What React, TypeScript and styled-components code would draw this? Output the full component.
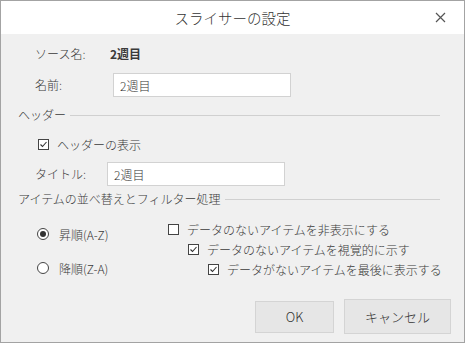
import styled, { createGlobalStyle } from "styled-components";

const GlobalStyle = createGlobalStyle`
  html, body {
    margin: 0;
    padding: 0;
    background: #ffffff;
  }
  body {
    font-family: "Noto Sans CJK JP", "Noto Sans", sans-serif;
    font-weight: 300;
    color: #3a3a3a;
  }
`;

const Dialog = styled.div`
  width: 465px;
  height: 343px;
  box-sizing: border-box;
  border: 1px solid #a3a3a3;
  background: #f0f0f0;
  display: flex;
  flex-direction: column;
`;

const TitleBar = styled.header`
  height: 33px;
  background: #fff;
  display: grid;
  grid-template-columns: 40px 1fr 40px;
  align-items: center;
`;

const Title = styled.h1`
  grid-column: 2;
  margin: 0;
  text-align: center;
  font-size: 14.5px;
  font-weight: 300;
  color: #333;
  line-height: 33px;
`;

const CloseButton = styled.button`
  grid-column: 3;
  width: 20px;
  height: 20px;
  padding: 0;
  border: 0;
  background: transparent;
  display: flex;
  align-items: center;
  justify-content: center;
  margin-left: 6px;
  cursor: pointer;
`;

const Body = styled.div`
  padding: 0 24px 0 17px;
  font-size: 12px;
`;

const Row = styled.div<{ $top: number; $indent?: number }>`
  display: flex;
  align-items: center;
  margin-top: ${(p) => p.$top}px;
  padding-left: ${(p) => p.$indent ?? 17}px;
  min-height: 20px;
`;

const Label = styled.span<{ $width: number }>`
  width: ${(p) => p.$width}px;
  flex-shrink: 0;
  line-height: 20px;
`;

const Value = styled.span`
  font-weight: 700;
  line-height: 20px;
`;

const TextInput = styled.input`
  width: 178px;
  height: 24px;
  box-sizing: border-box;
  border: 1px solid #d2d2d2;
  background: #fff;
  padding: 0 6px;
  font: inherit;
  font-size: 12px;
  color: #333;
  outline: none;
`;

const SectionHeader = styled.div<{ $top: number }>`
  display: flex;
  align-items: center;
  gap: 4px;
  margin-top: ${(p) => p.$top}px;
  height: 16px;
  line-height: 16px;

  &::after {
    content: "";
    flex: 1;
    height: 1px;
    background: #d0d0d0;
  }
`;

const Options = styled.div`
  display: grid;
  grid-template-columns: 131px 1fr;
  padding-left: 19px;
  margin-top: 12px;
`;

const RadioGroup = styled.div`
  display: flex;
  flex-direction: column;
  gap: 14px;
  padding-top: 5px;
`;

const CheckGroup = styled.div`
  display: flex;
  flex-direction: column;
`;

const OptionLine = styled.label<{ $level?: number; $gap: number }>`
  display: flex;
  align-items: center;
  gap: ${(p) => p.$gap}px;
  height: 20px;
  padding-left: ${(p) => (p.$level ?? 0) * 20}px;
  white-space: nowrap;
`;

const Box = styled.span`
  width: 11px;
  height: 11px;
  box-sizing: border-box;
  border: 1px solid #444;
  background: #fff;
  display: flex;
  align-items: center;
  justify-content: center;
  flex-shrink: 0;
`;

const Radio = styled.span<{ $on?: boolean }>`
  width: 12px;
  height: 12px;
  box-sizing: border-box;
  border: 1px solid #444;
  border-radius: 50%;
  background: #fff;
  display: flex;
  align-items: center;
  justify-content: center;
  flex-shrink: 0;

  &::after {
    content: "";
    width: 6px;
    height: 6px;
    border-radius: 50%;
    background: ${(p) => (p.$on ? "#333" : "transparent")};
  }
`;

const Footer = styled.div`
  margin-top: auto;
  display: flex;
  justify-content: flex-end;
  align-items: center;
  gap: 10px;
  padding: 0 13px 8px 0;
`;

const Button = styled.button<{ $w: number; $h: number }>`
  width: ${(p) => p.$w}px;
  height: ${(p) => p.$h}px;
  box-sizing: border-box;
  border: 1px solid #d4d4d4;
  background: #e6e6e6;
  font-family: inherit;
  font-weight: 300;
  font-size: 13px;
  color: #333;
  padding: 0;
`;

function CheckBox({ checked }: { checked?: boolean }) {
  return (
    <Box>
      {checked && (
        <svg width="9" height="9" viewBox="0 0 9 9">
          <polyline points="1.5,4.5 3.5,6.5 7.5,2" fill="none" stroke="#333" strokeWidth="1.1" />
        </svg>
      )}
    </Box>
  );
}

export default function App() {
  return (
    <>
      <GlobalStyle />
      <Dialog>
        <TitleBar>
          <Title>スライサーの設定</Title>
          <CloseButton aria-label="閉じる">
            <svg width="11" height="11" viewBox="0 0 11 11">
              <path d="M1 1 L10 10 M10 1 L1 10" stroke="#555" strokeWidth="1.2" />
            </svg>
          </CloseButton>
        </TitleBar>
        <Body>
          <Row $top={10}>
            <Label $width={75}>ソース名:</Label>
            <Value>2週目</Value>
          </Row>
          <Row $top={9}>
            <Label $width={78}>名前:</Label>
            <TextInput defaultValue="2週目" />
          </Row>
          <SectionHeader $top={10}>ヘッダー</SectionHeader>
          <Row $top={11} $indent={20}>
            <OptionLine $gap={8}>
              <CheckBox checked />
              ヘッダーの表示
            </OptionLine>
          </Row>
          <Row $top={8}>
            <Label $width={72}>タイトル:</Label>
            <TextInput defaultValue="2週目" />
          </Row>
          <SectionHeader $top={5}>アイテムの並べ替えとフィルター処理</SectionHeader>
          <Options>
            <RadioGroup>
              <OptionLine $gap={10}>
                <Radio $on />
                昇順(A-Z)
              </OptionLine>
              <OptionLine $gap={10}>
                <Radio />
                降順(Z-A)
              </OptionLine>
            </RadioGroup>
            <CheckGroup>
              <OptionLine $gap={8}>
                <CheckBox />
                データのないアイテムを非表示にする
              </OptionLine>
              <OptionLine $gap={8} $level={1}>
                <CheckBox checked />
                データのないアイテムを視覚的に示す
              </OptionLine>
              <OptionLine $gap={8} $level={2}>
                <CheckBox checked />
                データがないアイテムを最後に表示する
              </OptionLine>
            </CheckGroup>
          </Options>
        </Body>
        <Footer>
          <Button $w={79} $h={32}>OK</Button>
          <Button $w={107} $h={35}>キャンセル</Button>
        </Footer>
      </Dialog>
    </>
  );
}
